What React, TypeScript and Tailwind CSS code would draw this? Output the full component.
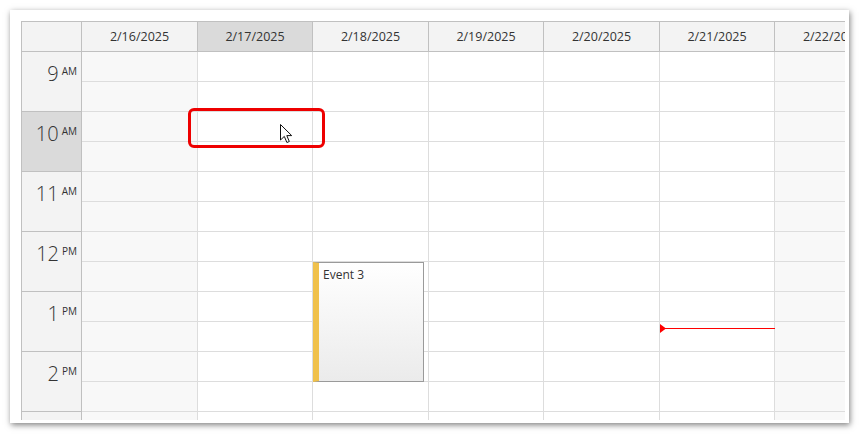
const days = [
  { label: "2/16/2025", w: "w-[116px]", weekend: true },
  { label: "2/17/2025", w: "w-[115px]", selected: true },
  { label: "2/18/2025", w: "w-[116px]" },
  { label: "2/19/2025", w: "w-[115px]" },
  { label: "2/20/2025", w: "w-[116px]" },
  { label: "2/21/2025", w: "w-[115px]" },
  { label: "2/22/2025", w: "w-[116px]", weekend: true },
];

const hours = [
  { h: "9", ap: "AM" },
  { h: "10", ap: "AM", selected: true },
  { h: "11", ap: "AM" },
  { h: "12", ap: "PM" },
  { h: "1", ap: "PM" },
  { h: "2", ap: "PM" },
  { h: "3", ap: "PM" },
];

export default function App() {
  return (
    <div className="h-[435px] w-[860px] overflow-hidden bg-white p-[10px] font-['Open_Sans',sans-serif] text-[#333]">
      <div className="h-[413px] w-[839px] bg-white pl-[11px] pt-[11px] shadow-[1px_2px_6px_rgba(0,0,0,0.5)]">
        <div className="relative h-[399px] w-[824px] overflow-hidden border-l border-t border-[#c0c0c0]">
          {/* header */}
          <div className="flex h-[30px] border-b border-[#c0c0c0] bg-[#f3f3f3]">
            <div className="w-[60px] shrink-0 border-r border-[#c0c0c0]" />
            {days.map((d) => (
              <div
                key={d.label}
                className={`${d.w} flex shrink-0 items-center justify-center whitespace-nowrap border-r border-[#c0c0c0] pt-px text-[12.5px] ${
                  d.selected ? "bg-[#dadada]" : ""
                }`}
              >
                {d.label}
              </div>
            ))}
          </div>

          {/* body */}
          <div className="flex">
            <div className="w-[60px] shrink-0">
              {hours.map((r) => (
                <div
                  key={r.h}
                  className={`flex h-[60px] items-start justify-end border-b border-r border-[#c0c0c0] pr-[4px] pt-[12px] ${
                    r.selected ? "bg-[#dadada]" : "bg-[#f3f3f3]"
                  }`}
                >
                  <span className="text-[20px] font-light leading-none">{r.h}</span>
                  <span className="ml-[3px] mt-[2px] text-[10px] leading-none">{r.ap}</span>
                </div>
              ))}
            </div>

            {days.map((d, i) => (
              <div
                key={d.label}
                className={`${d.w} relative shrink-0 border-r border-[#dddddd] ${
                  d.weekend ? "bg-[#f8f8f8]" : "bg-white"
                }`}
              >
                {hours.flatMap((r) => [
                  <div key={r.h + "a"} className="h-[30px] border-b border-[#dddddd]" />,
                  <div key={r.h + "b"} className="h-[30px] border-b border-[#dddddd]" />,
                ])}

                {i === 2 && (
                  <div className="absolute left-0 top-[210px] h-[120px] w-[111px] border border-l-[6px] border-[#9a9a9a] border-l-[#f0c14b] bg-linear-to-b from-white to-[#ebebeb] pl-[4px] pt-[6px] text-[12px] leading-none">
                    Event 3
                  </div>
                )}

                {i === 5 && (
                  <>
                    <div className="absolute left-0 top-[276px] h-px w-[115px] bg-[#ff0000]" />
                    <svg width="6" height="9" viewBox="0 0 6 9" className="absolute left-0 top-[272px]">
                      <path d="M0 0 L6 4.5 L0 9 Z" fill="#ff0000" />
                    </svg>
                  </>
                )}
              </div>
            ))}
          </div>

          {/* selection highlight */}
          <div className="absolute left-[166px] top-[86px] h-[40px] w-[137px] rounded-[6px] border-[3px] border-[#ee0000]" />

          {/* mouse cursor */}
          <svg
            width="13"
            height="21"
            viewBox="0 0 13 21"
            className="absolute left-[257.5px] top-[101.5px]"
          >
            <path
              d="M0.5 0.5 L0.5 16 L4.3 12.4 L6.9 18.5 L9.3 17.5 L6.8 11.6 L11.7 11.6 Z"
              fill="white"
              stroke="#111"
              strokeWidth="1"
              strokeLinejoin="round"
            />
          </svg>
        </div>
      </div>
    </div>
  );
}
